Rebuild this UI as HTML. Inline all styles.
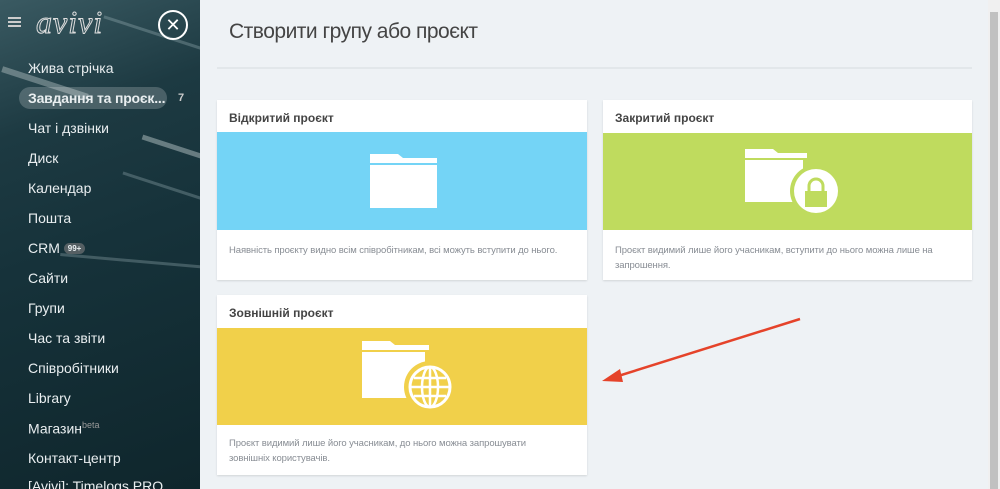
<!DOCTYPE html>
<html><head><meta charset="utf-8"><style>
*{margin:0;padding:0;box-sizing:border-box}
body{width:1000px;height:489px;overflow:hidden;font-family:"Liberation Sans","DejaVu Sans",sans-serif;background:#eef2f5;position:relative}
.side{position:absolute;left:0;top:0;width:200px;height:489px;background:linear-gradient(160deg,#3a5a62 0%,#1d3a42 25%,#16323a 50%,#0f262c 100%);overflow:hidden}
.side .stripe{position:absolute;height:3px;background:rgba(200,220,225,.25);transform:rotate(18deg)}
.menu{position:absolute;left:28px;font-size:14px;color:#e9eef0}
.pill{position:absolute;left:19px;top:87px;width:148px;height:22px;border-radius:11px;background:rgba(255,255,255,.2)}
.main{position:absolute;left:200px;top:0;width:788px;height:489px;background:#eef2f5}
.scroll{position:absolute;left:988px;top:0;width:12px;height:489px;background:#f0f0f0}
.thumb{position:absolute;left:990px;top:12px;width:8px;height:477px;background:#c1c1c1}
.title{position:absolute;left:229px;top:20px;font-size:21px;color:#444;font-weight:300;letter-spacing:-.5px}
.sep{position:absolute;left:217px;top:67px;width:755px;height:2px;background:#e2e7ea}
.card{position:absolute;background:#fff;box-shadow:0 1px 2px rgba(0,0,0,.12)}
.card h3{font-size:12px;font-weight:bold;color:#444;position:absolute;left:12px;top:11px}
.img{position:absolute;left:0;width:100%;overflow:hidden}
.card p{position:absolute;left:12px;font-size:9.5px;color:#888d94;line-height:15px;width:350px;letter-spacing:-.1px}
</style></head><body>
<div class="side">
<div class="stripe" style="left:100px;top:40px;width:160px"></div>
<div class="stripe" style="left:0;top:80px;width:90px;height:6px;background:rgba(220,230,230,.35)"></div>
<div class="stripe" style="left:140px;top:150px;width:100px;height:5px;background:rgba(220,230,230,.4)"></div>
<div class="stripe" style="left:120px;top:190px;width:120px"></div>
<div class="stripe" style="left:60px;top:260px;width:160px;transform:rotate(5deg)"></div>
<div style="position:absolute;left:8px;top:17px;width:13px;height:2px;background:#ccc;box-shadow:0 4px 0 #ccc,0 8px 0 #ccc"></div>
<div style="position:absolute;left:36px;top:4px;font-family:'Liberation Serif',serif;font-style:italic;font-size:32px;color:transparent;-webkit-text-stroke:1px #ddd;letter-spacing:1px">avivi</div>
<div style="position:absolute;left:158px;top:10px;width:30px;height:30px;border:2px solid #fff;border-radius:50%;color:#fff;text-align:center;font-size:18px;line-height:26px">✕</div>
<div class="pill"></div>
<div class="menu" style="top:60px">Жива стрічка</div>
<div class="menu" style="top:90px;font-weight:bold;letter-spacing:-.2px">Завдання та проєк...</div>
<div style="position:absolute;left:178px;top:92px;font-size:11px;color:#ccc;font-weight:bold">7</div>
<div class="menu" style="top:120px">Чат і дзвінки</div>
<div class="menu" style="top:150px">Диск</div>
<div class="menu" style="top:180px">Календар</div>
<div class="menu" style="top:210px">Пошта</div>
<div class="menu" style="top:240px">CRM <span style="font-size:8px;background:#555f63;border-radius:7px;padding:1px 4px;vertical-align:2px;font-weight:bold">99+</span></div>
<div class="menu" style="top:270px">Сайти</div>
<div class="menu" style="top:300px">Групи</div>
<div class="menu" style="top:330px">Час та звіти</div>
<div class="menu" style="top:360px">Співробітники</div>
<div class="menu" style="top:390px">Library</div>
<div class="menu" style="top:420px">Магазин<sup style="font-size:9px;color:#999">beta</sup></div>
<div class="menu" style="top:450px">Контакт-центр</div>
<div class="menu" style="top:478px">[Avivi]: Timelogs PRO</div>
</div>
<div class="main"></div>
<div class="scroll"></div><div class="thumb"></div>
<div class="title">Створити групу або проєкт</div>
<div class="sep"></div>

<div class="card" style="left:217px;top:100px;width:370px;height:180px">
<h3>Відкритий проєкт</h3>
<div class="img" style="top:32px;height:98px;background:#74d4f6">
<svg width="370" height="98" style="position:absolute;left:0;top:0"><g fill="#fff"><path d="M153 22h28l5 4h34v5H153z"/><rect x="153" y="33" width="67" height="43"/></g></svg>
</div>
<p style="top:143px">Наявність проєкту видно всім співробітникам, всі можуть вступити до нього.</p>
</div>

<div class="card" style="left:603px;top:100px;width:369px;height:180px">
<h3>Закритий проєкт</h3>
<div class="img" style="top:33px;height:97px;background:#bfdb5e">
<svg width="369" height="97" style="position:absolute;left:0;top:0"><g fill="#fff"><path d="M142 16h28l5 4h29v5H142z"/><rect x="142" y="27" width="58" height="42"/></g><circle cx="213" cy="58" r="26" fill="#bfdb5e"/><circle cx="213" cy="58" r="22" fill="#fff"/><rect x="202" y="58" width="22" height="16" fill="#bfdb5e"/><path d="M206 58v-5a7 7 0 0 1 14 0v5" stroke="#bfdb5e" stroke-width="3" fill="none"/></svg>
</div>
<p style="top:143px">Проєкт видимий лише його учасникам, вступити до нього можна лише на запрошення.</p>
</div>

<div class="card" style="left:217px;top:295px;width:370px;height:180px">
<h3>Зовнішній проєкт</h3>
<div class="img" style="top:33px;height:97px;background:#f1d04a">
<svg width="370" height="97" style="position:absolute;left:0;top:0"><g fill="#fff"><path d="M145 13h28l5 4h34v5H145z"/><rect x="145" y="24" width="63" height="46"/></g><circle cx="213" cy="59" r="26" fill="#f1d04a"/><circle cx="213" cy="59" r="20" fill="none" stroke="#fff" stroke-width="3"/><ellipse cx="213" cy="59" rx="8" ry="20" fill="none" stroke="#fff" stroke-width="2.5"/><path d="M193 59h40M197 50h32M197 68h32M213 39v40" stroke="#fff" stroke-width="2.5"/></svg>
</div>
<p style="top:141px;width:320px">Проєкт видимий лише його учасникам, до нього можна запрошувати зовнішніх користувачів.</p>
</div>

<svg width="1000" height="489" style="position:absolute;left:0;top:0"><path d="M800 319L615 377" stroke="#e5432a" stroke-width="2.5"/><path d="M602 381l18-12 3 13z" fill="#e5432a"/></svg>
</body></html>
